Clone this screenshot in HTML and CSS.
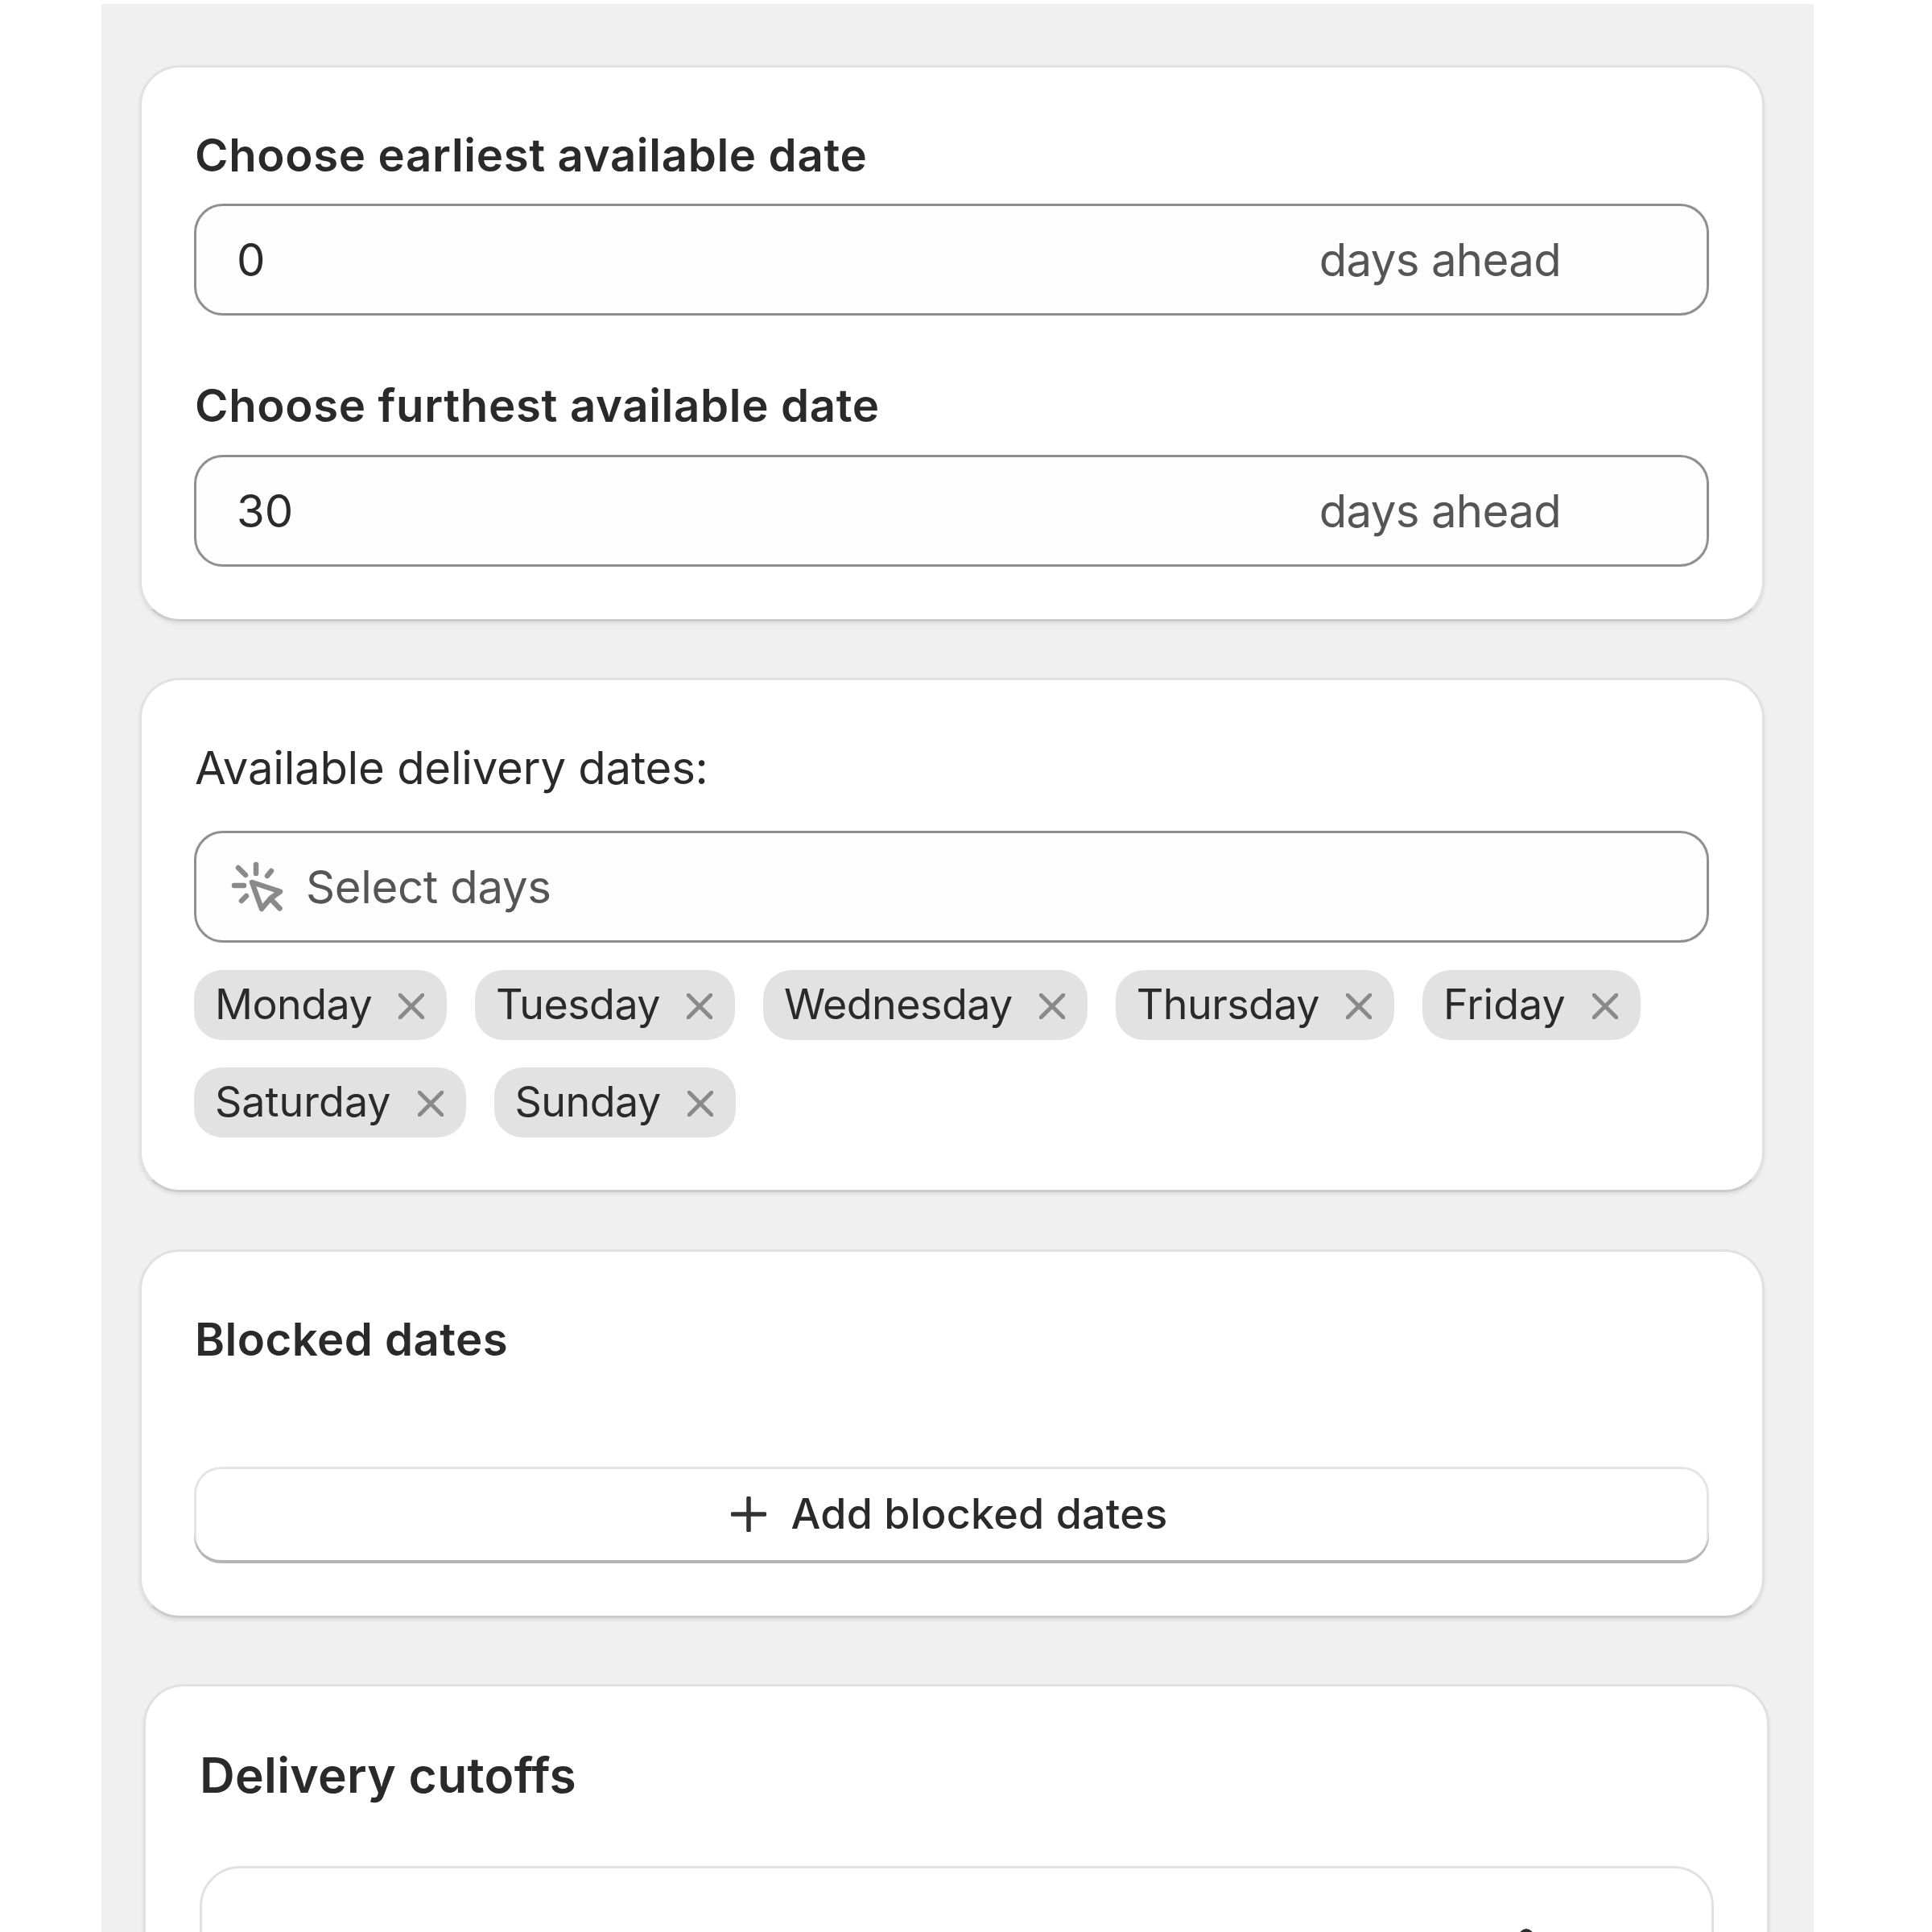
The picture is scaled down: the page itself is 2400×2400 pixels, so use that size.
FILE: index.html
```html
<!doctype html>
<html>
  <head>
    <meta charset="utf-8">
    <title>Delivery settings</title>
    <link rel="stylesheet" href="styles.css">
  </head>
  <body>
    <div class="panel">

      <div class="card">
        <div class="label bold">Choose earliest available date</div>
        <div class="field">
          <span class="value">0</span>
          <span class="suffix">days ahead</span>
        </div>
        <div class="label bold second">Choose furthest available date</div>
        <div class="field">
          <span class="value">30</span>
          <span class="suffix">days ahead</span>
        </div>
      </div>

      <div class="card days">
        <div class="label">Available delivery dates:</div>
        <div class="field">
          <svg class="cursor" viewBox="0 0 68 68">
            <path d="M33 6V17M11 10L20 19M52 14L47 20M6 32H18M21 45L15 51"/>
            <path d="M28 28L63 39.500L51 48L40 61ZM51 48.500L62.500 60.500"/>
          </svg>
          <span class="placeholder">Select days</span>
        </div>
        <ul class="tags">
          <li class="tag"><span>Monday</span><svg class="remove" viewBox="0 0 32 32"><path d="M2 2L30 30M30 2L2 30"/></svg></li>
          <li class="tag"><span>Tuesday</span><svg class="remove" viewBox="0 0 32 32"><path d="M2 2L30 30M30 2L2 30"/></svg></li>
          <li class="tag"><span>Wednesday</span><svg class="remove" viewBox="0 0 32 32"><path d="M2 2L30 30M30 2L2 30"/></svg></li>
          <li class="tag"><span>Thursday</span><svg class="remove" viewBox="0 0 32 32"><path d="M2 2L30 30M30 2L2 30"/></svg></li>
          <li class="tag loose"><span>Friday</span><svg class="remove" viewBox="0 0 32 32"><path d="M2 2L30 30M30 2L2 30"/></svg></li>
          <li class="tag loose"><span>Saturday</span><svg class="remove" viewBox="0 0 32 32"><path d="M2 2L30 30M30 2L2 30"/></svg></li>
          <li class="tag"><span>Sunday</span><svg class="remove" viewBox="0 0 32 32"><path d="M2 2L30 30M30 2L2 30"/></svg></li>
        </ul>
      </div>

      <div class="card blocked">
        <div class="label bold">Blocked dates</div>
        <div class="button">
          <svg class="plus" viewBox="0 0 44 44"><path d="M22 2V42M2 22H42"/></svg>
          <span>Add blocked dates</span>
        </div>
      </div>

      <div class="card cutoffs">
        <div class="title">Delivery cutoffs</div>
        <div class="inner">
          <svg class="more" viewBox="0 0 18 18"><circle cx="9" cy="9" r="9"/></svg>
        </div>
      </div>

    </div>
  </body>
</html>
```
FILE: styles.css
```css
*{
  box-sizing:border-box;
}
html{
  background:#fff;
}
body{
  margin:0;
  height:2400px;
  overflow:hidden;
  font-family:Inter, "Liberation Sans", sans-serif;
  font-optical-sizing:none;
  font-size:56.300px;
  color:#2a2a2a;
}
.panel{
  width:2127px;
  height:2395px;
  margin:5px 0 0 126px;
  padding:76px 61px 0 47px;
  background:#f0f0f0;
  overflow:hidden;
}
.card{
  padding:65px 66px 65px 65px;
  border:3px solid #e1e1e1;
  border-bottom-color:#cbcbcb;
  border-radius:50px;
  background:#fff;
  box-shadow:0 3px 4px rgba(0,0,0,.08);
}
.days{
  margin-top:70px;
}
.blocked{
  margin-top:71px;
}
.cutoffs{
  height:600px;
  margin:82px -6px 0 5px;
  padding:65px 66px 65px 67px;
}

.label{
  height:87px;
  margin-bottom:17px;
  padding-left:1px;
  line-height:87px;
  letter-spacing:-.25px;
}
.days .label{
  margin-bottom:35px;
}
.label.second{
  height:88px;
  margin-top:68px;
  line-height:88px;
}
.bold{
  font-weight:600;
  letter-spacing:.66px;
}
.blocked .bold{
  letter-spacing:.45px;
}
.field{
  display:flex;
  align-items:center;
  height:139px;
  padding:0 181px 0 50px;
  border:3px solid #8e8f8f;
  border-radius:36px;
  background:#fdfdfd;
}
.suffix{
  margin-left:auto;
  color:#555;
  letter-spacing:-.65px;
}
.placeholder{
  margin-left:27px;
  color:#555;
  letter-spacing:-.35px;
}

.tags{
  display:flex;
  flex-wrap:wrap;
  gap:34px 35px;
  margin:34px 0 0;
  padding:0;
  list-style:none;
}
.tag{
  display:flex;
  align-items:center;
  height:87px;
  padding:0 28px 0 26px;
  border-radius:35px;
  background:#e2e2e2;
  font-size:52px;
  letter-spacing:-.55px;
}
.tag span{
  margin-bottom:2px;
}
.loose{
  letter-spacing:0;
}

svg{
  display:block;
  flex:none;
  fill:none;
  stroke:#8a8a8a;
}
.cursor{
  width:68px;
  height:68px;
  margin-left:-9px;
  stroke-width:6.500;
  stroke-linecap:round;
  stroke-linejoin:round;
}
.remove{
  width:32px;
  height:32px;
  margin:2px 0 0 33px;
  stroke-width:5;
  stroke-linecap:round;
}
.plus{
  width:44px;
  height:44px;
  margin:2px 31px 0 0;
  stroke:#333;
  stroke-width:5.500;
  stroke-linecap:round;
}

.button{
  display:flex;
  align-items:center;
  justify-content:center;
  height:120px;
  margin-top:115px;
  padding:0 6px 4px 0;
  border-radius:34px;
  box-shadow:inset 0 -4px 0 #b5b5b5, inset 0 0 0 3px #e4e4e4;
  font-size:52px;
  font-weight:500;
  letter-spacing:.28px;
}
.title{
  height:90px;
  font-size:60.500px;
  font-weight:600;
  line-height:91px;
  letter-spacing:.28px;
}
.inner{
  height:400px;
  margin-top:68px;
  padding:75px 0 0 1636px;
  border:3px solid #e1e1e1;
  border-radius:50px;
}
.more{
  width:18px;
  height:18px;
  fill:#2a2a2a;
  stroke:none;
}
```
